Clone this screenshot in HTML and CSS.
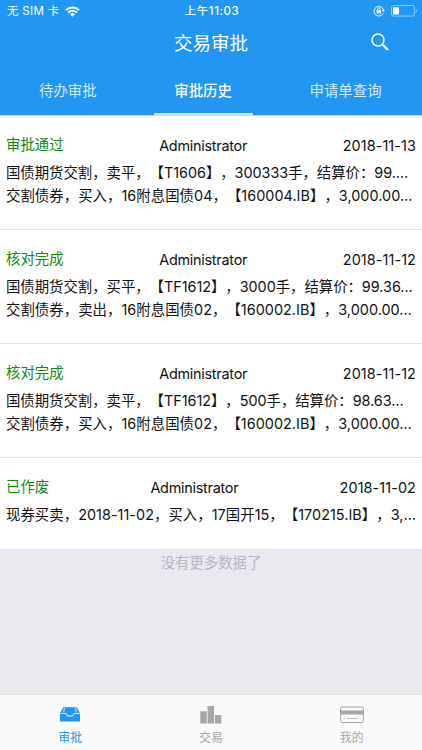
FILE: index.html
```html
<!DOCTYPE html>
<html lang="zh-CN">
<head>
<meta charset="utf-8">
<meta name="viewport" content="width=device-width">
<title>交易审批</title>
<link rel="stylesheet" href="styles.css">
</head>
<body>
<div class="app">
  <header class="header">
    <div class="status">
      <div class="carrier"><span>无 SIM 卡</span>
        <svg class="wifi" viewBox="0 0 15 11"><path d="M1 4.2a9.3 9.3 0 0 1 13 0M3.2 6.5a6.2 6.2 0 0 1 8.6 0" fill="none" stroke="currentColor" stroke-width="2"/><path d="M5 8.3a3.6 3.6 0 0 1 5 0L7.5 10.8z" fill="currentColor"/></svg>
      </div>
      <span class="clock">上午11:03</span>
      <div class="power">
        <svg class="lock" viewBox="0 0 12 12"><path d="M10.1 8.5A4.8 4.8 0 1 1 10.5 5" fill="none" stroke="currentColor"/><path d="M9 5.2h3l-1.5 2z" fill="currentColor"/><rect x="3.6" y="5.2" width="4.4" height="3.3" fill="currentColor"/><path d="M4.5 5.3V4.2a1.3 1.3 0 0 1 2.6 0v1.1" fill="none" stroke="currentColor" stroke-width=".9"/></svg>
        <svg class="battery" viewBox="0 0 26 12"><rect x=".5" y=".5" width="23" height="10.6" rx="2.2" fill="none" stroke="currentColor" opacity=".5"/><rect x="2" y="2.2" width="6" height="7.2" rx=".5" fill="currentColor"/><path d="M24.8 4v4q1-.6 1-2t-1-2" fill="currentColor" opacity=".5"/></svg>
      </div>
    </div>
    <div class="navbar">
      <h1 class="title">交易审批</h1>
      <svg class="search" viewBox="0 0 18 18"><circle cx="7" cy="7" r="6" fill="none" stroke="currentColor" stroke-width="1.5"/><path d="M11.4 11.4l1.2 1.2" stroke="currentColor" stroke-width="1.5"/><path d="M12.4 12.4l4 4" stroke="currentColor" stroke-width="2.3" stroke-linecap="round"/></svg>
    </div>
    <nav class="tabs">
      <span class="tab">待办审批</span>
      <span class="tab active">审批历史</span>
      <span class="tab">申请单查询</span>
    </nav>
  </header>
  <main class="list">
    <article class="item">
      <div class="head"><span class="state">审批通过</span><span class="name">Administrator</span><time>2018-11-13</time></div>
      <p>国债期货交割，卖平，【T1606】，300333手，结算价：99.…</p>
      <p class="bond">交割债券，买入，16附息国债04，【160004.IB】，3,000.00…</p>
    </article>
    <article class="item">
      <div class="head"><span class="state">核对完成</span><span class="name">Administrator</span><time>2018-11-12</time></div>
      <p>国债期货交割，买平，【TF1612】，3000手，结算价：99.36…</p>
      <p class="bond">交割债券，卖出，16附息国债02，【160002.IB】，3,000.00…</p>
    </article>
    <article class="item">
      <div class="head"><span class="state">核对完成</span><span class="name">Administrator</span><time>2018-11-12</time></div>
      <p>国债期货交割，卖平，【TF1612】，500手，结算价：98.63…</p>
      <p class="bond">交割债券，买入，16附息国债02，【160002.IB】，3,000.00…</p>
    </article>
    <article class="item short">
      <div class="head"><span class="state">已作废</span><span class="name">Administrator</span><time>2018-11-02</time></div>
      <p class="bond">现券买卖，2018-11-02，买入，17国开15，【170215.IB】，3,…</p>
    </article>
    <p class="end">没有更多数据了</p>
  </main>
  <footer class="bottom">
    <div class="dest current">
      <svg viewBox="0 0 24 20"><path d="M5.3 2.2h13.400l3.300 6h-6.200l-1.700 2.300h-4.200L8.200 8.200H2z" fill="currentColor"/><path d="M6.500 3L5.700 7.500M17.500 3l.8 4.500" stroke="#fafafa" stroke-width=".8"/><path d="M2 9h5.800l1.700 2.400h5L16.200 9H22v7.500H2z" fill="currentColor"/></svg>
      <span>审批</span>
    </div>
    <div class="dest">
      <svg viewBox="0 0 24 20"><path d="M1.300 6.200h6.400v12.300H1.300zM8.600 1h6.400v17.500H8.600zM15.900 10h6.400v8.500h-6.400z" fill="currentColor"/></svg>
      <span>交易</span>
    </div>
    <div class="dest">
      <svg viewBox="0 0 24 20"><rect x=".6" y="2" width="22.800" height="15.500" rx="1.200" fill="none" stroke="currentColor"/><path d="M.6 5.500h22.800v4H.6z" fill="currentColor"/><path d="M3.500 13.500h1.500M7 13.500h10.500" stroke="currentColor" stroke-width=".8"/></svg>
      <span>我的</span>
    </div>
  </footer>
</div>
</body>
</html>
```
FILE: styles.css
```css
* { box-sizing: border-box; }
body {
  margin: 0;
  font-family: Inter, "Noto Sans CJK SC", sans-serif;
  text-spacing-trim: space-all;
  color: #111;
  background: #e9e9ef;
}
h1, p { margin: 0; font-weight: 400; }
svg { display: block; }
.app { height: 750px; display: flex; flex-direction: column; overflow: hidden; }
.header { height: 116px; flex: none; background: #2196f3; color: #fff; border-bottom: 1px solid #b5d9f5; }
.status { height: 21px; display: grid; grid-template-columns: 1fr auto 1fr; align-items: center; padding: 1px 5px 0 7px; font-size: 11.5px; line-height: 20px; }
.carrier { display: flex; align-items: center; gap: 6px; letter-spacing: .3px; }
.wifi { width: 15px; height: 11px; }
.clock { font-weight: 500; letter-spacing: .6px; }
.power { display: flex; justify-content: flex-end; align-items: center; gap: 6px; }
.lock { width: 12px; height: 12px; }
.battery { width: 26px; height: 12px; }
.navbar { height: 44px; display: grid; grid-template-columns: 1fr auto 1fr; align-items: center; }
.title { grid-column: 2; font-size: 18.5px; line-height: 43px; }
.search { width: 18px; height: 18px; justify-self: end; margin: 0 33px 2px 0; }
.tabs { height: 50px; display: flex; gap: 57px; padding-left: 39px; font-size: 14.4px; line-height: 51px; text-align: center; }
.tab { height: 51px; color: #d5ecfd; }
.tab.active { width: 99px; color: #fff; font-weight: 500; border-bottom: 3px solid #d5dfec; }
.list { flex: 1; }
.item { height: 114px; padding: 17px 6px 0; background: #fff; border-bottom: 1px solid #e3e3e6; font-size: 14.4px; }
.item.short { height: 92px; }
.head { display: flex; justify-content: space-between; line-height: 24px; height: 28px; }
.head time, .name { padding-top: 1px; }
.head time { letter-spacing: .1px; }
.name { letter-spacing: -.25px; }
.state { color: #108a10; }
.item p { line-height: 23px; letter-spacing: -.03px; white-space: nowrap; }
.item .bond { letter-spacing: .04px; }
.end { text-align: center; font-size: 14.4px; line-height: 26px; color: #b3b7c3; }
.bottom { height: 56px; flex: none; display: grid; grid-template-columns: repeat(3, 1fr); background: #fafafa; border-top: 1px solid #dededf; color: #a6a6a6; }
.dest { display: flex; flex-direction: column; align-items: center; padding-top: 10px; font-size: 12px; line-height: 18px; gap: 4px; }
.dest svg { width: 24px; height: 20px; }
.current { color: #2196f3; }
```
